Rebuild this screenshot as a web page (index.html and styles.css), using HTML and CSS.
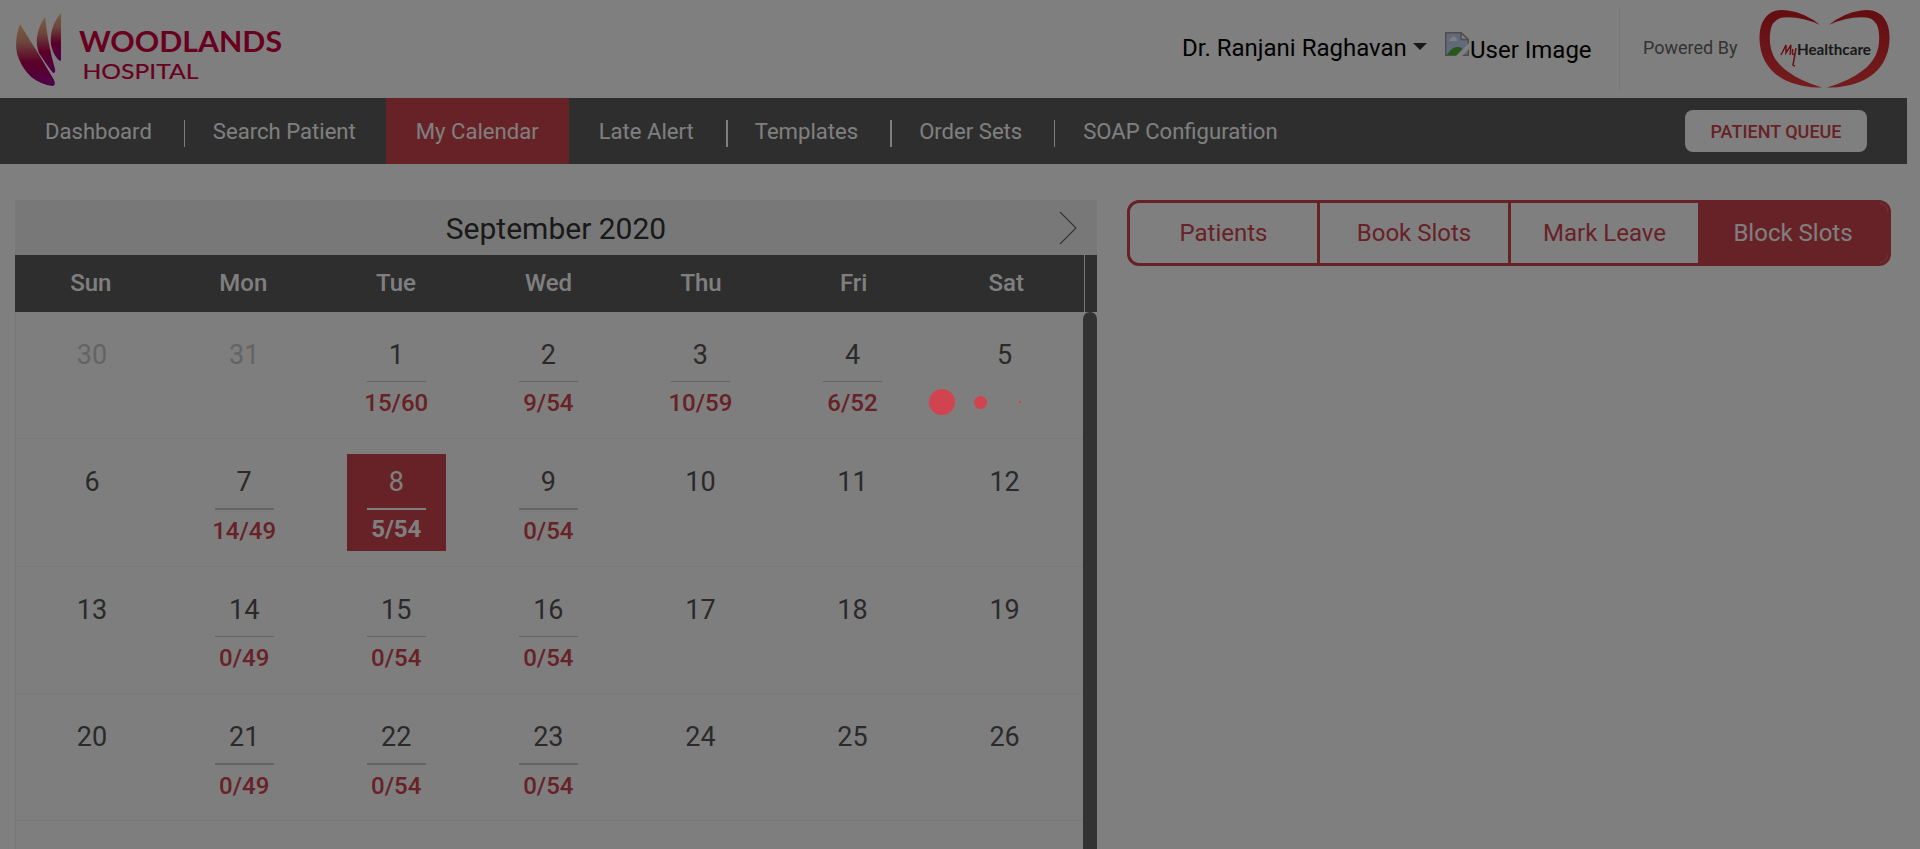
FILE: index.html
```html
<!DOCTYPE html>
<html lang="en">
<head>
<meta charset="utf-8">
<title>My Calendar</title>
<link rel="stylesheet" href="styles.css">
</head>
<body>
<header class="topbar">
  <svg class="brand" width="300" height="98" viewBox="0 0 300 98">
    <defs>
      <linearGradient id="petal" x1="0" y1="0" x2="0" y2="1">
        <stop offset="0" stop-color="#f0be7c"/><stop offset=".3" stop-color="#dc8a78"/>
        <stop offset=".62" stop-color="#b5004e"/><stop offset="1" stop-color="#9c0094"/>
      </linearGradient>
    </defs>
    <g fill="url(#petal)">
      <path d="M20 24C15 38 15 50 19 59C25 74 36 84 53 86Q56 85 54 80L38 53Q26 34 20 24Z"/>
      <path d="M45 17C36 31 35 42 39 53Q46 64 53 73Q56 73 55 69Q48 45 45 17Z"/>
      <path d="M61 13C52 24 50 34 51 45Q54 57 60 61Q61 61 61 59Z"/>
    </g>
    <g fill="#d00040" font-family="Lato, sans-serif">
      <text x="79" y="52" font-size="28.5" font-weight="700" textLength="203" lengthAdjust="spacingAndGlyphs">WOODLANDS</text>
      <text x="82.500" y="78.500" font-size="21.500" stroke="#d00040" stroke-width=".2" textLength="116" lengthAdjust="spacingAndGlyphs">HOSPITAL</text>
    </g>
  </svg>
  <div class="user">
    <span class="user-name">Dr. Ranjani Raghavan</span>
    <span class="caret"></span>
    <svg class="avatar" width="24" height="24" viewBox="0 0 24 24">
      <path d="M.7.7H16L23.300 7.500V23.300H.7Z" fill="#c3d4f5" stroke="#9a9a9a" stroke-width="1.400"/>
      <path d="M4 9Q5 6 7 6Q8 3 10 5Q12 6 12 9Z" fill="#fff"/>
      <path d="M2 23Q7 14 13 15Q16 15 18 17L12 23Z" fill="#4fae35"/>
      <path d="M16 .7V7.500H23.300Z" fill="#fff" stroke="#9a9a9a" stroke-width="1.400"/>
      <path d="M24 11L11 24H17L24 17Z" fill="#fff"/>
    </svg>
    <span class="user-alt">User Image</span>
  </div>
  <div class="powered">Powered By</div>
  <svg class="heart" width="132" height="80" viewBox="0 0 132 80">
    <defs><linearGradient id="hg" x1="0" y1="0" x2="0" y2="1"><stop offset="0" stop-color="#c81c24"/><stop offset="1" stop-color="#ea383c"/></linearGradient></defs>
    <g fill="url(#hg)">
      <path d="M61 16Q47 4 29 1.500Q14-1 6 9Q0 17 .5 30C1 53 15 72 45 77Q54 79 63 78.500Q41 72 28 62C13 51 10 38 11 25Q12 10 24 8.500Q42 7 61 16Z"/>
      <path d="M70 16Q84 4 102 1.500Q117-1 125 9Q131 17 130.500 30C130 53 116 72 86 77Q77 79 68 78.500Q90 72 103 62C118 51 121 38 120 25Q119 10 107 8.500Q89 7 70 16Z"/>
    </g>
    <path d="M22 46L27 36L27 44L32 36L31 46M34 40Q32 47 36 45L37 39M36.500 42L34 56L36 57" fill="none" stroke="#cf202c" stroke-width="1.500"/>
    <text x="38" y="46" font-family="Lato, sans-serif" font-weight="700" font-size="14.500" fill="#333" textLength="74" lengthAdjust="spacingAndGlyphs">Healthcare</text>
  </svg>
</header>

<nav class="nav">
  <a class="nav-item">Dashboard</a><i class="sep"></i>
  <a class="nav-item">Search Patient</a>
  <a class="nav-item nav-active">My Calendar</a>
  <a class="nav-item">Late Alert</a><i class="sep sep-wide"></i>
  <a class="nav-item">Templates</a><i class="sep sep-wide"></i>
  <a class="nav-item">Order Sets</a><i class="sep"></i>
  <a class="nav-item">SOAP Configuration</a>
  <button class="queue">PATIENT QUEUE</button>
</nav>

<main class="content">
  <section class="calendar">
    <div class="month"><span>September 2020</span>
      <svg class="next" width="18" height="34" viewBox="0 0 18 34"><path d="M1 1L17 17L1 33" fill="none" stroke="#666" stroke-width="1.100"/></svg>
    </div>
    <div class="weekdays"><span>Sun</span><span>Mon</span><span>Tue</span><span>Wed</span><span>Thu</span><span>Fri</span><span>Sat</span></div>
    <div class="scroller">
      <div class="weeks">
        <div class="week">
          <div class="day muted">30</div><div class="day muted">31</div>
          <div class="day">1<b>15/60</b></div><div class="day">2<b>9/54</b></div><div class="day">3<b>10/59</b></div><div class="day">4<b>6/52</b></div><div class="day">5</div>
        </div>
        <div class="week thick">
          <div class="day">6</div><div class="day">7<b>14/49</b></div><div class="day today">8<b>5/54</b></div><div class="day">9<b>0/54</b></div><div class="day">10</div><div class="day">11</div><div class="day">12</div>
        </div>
        <div class="week">
          <div class="day">13</div><div class="day">14<b>0/49</b></div><div class="day">15<b>0/54</b></div><div class="day">16<b>0/54</b></div><div class="day">17</div><div class="day">18</div><div class="day">19</div>
        </div>
        <div class="week thick">
          <div class="day">20</div><div class="day">21<b>0/49</b></div><div class="day">22<b>0/54</b></div><div class="day">23<b>0/54</b></div><div class="day">24</div><div class="day">25</div><div class="day">26</div>
        </div>
      </div>
      <div class="thumb"></div>
    </div>
  </section>
  <div class="tabs"><a class="tab">Patients</a><a class="tab tab-ruled">Book Slots</a><a class="tab tab-ruled">Mark Leave</a><a class="tab tab-active">Block Slots</a></div>
</main>

<div class="overlay">
  <div class="loader"><i class="dot dot-l"></i><i class="dot dot-m"></i><i class="dot dot-s"></i></div>
</div>
</body>
</html>
```
FILE: styles.css
```css
* { box-sizing: border-box; }
body {
  margin: 0;
  height: 849px;
  overflow: hidden;
  display: flex;
  flex-direction: column;
  background: #fff;
  font-family: Roboto, sans-serif;
  color: #000;
}

/* Header */
.topbar { height: 98px; flex: none; display: flex; padding-right: 29px; }
.brand { flex: none; }
.user { margin-left: auto; display: flex; font-size: 24px; line-height: 28px; padding-top: 34px; }
.user-name { width: 223px; white-space: nowrap; }
.caret { margin: 9px 18px 0 8px; width: 14px; height: 7px; border: 7px solid transparent; border-top-color: #333; border-bottom: 0; }
.avatar { margin-top: -2px; }
.user-alt { width: 120px; margin: 2px 0 0 1px; white-space: nowrap; }
.powered {
  width: 140px;
  height: 82px;
  margin: 8px 0 0 29px;
  padding-left: 23px;
  border-left: 1px solid #eee;
  font-size: 18px;
  line-height: 80px;
  color: #666;
}
.heart { flex: none; margin-top: 9px; }

/* Navigation */
.nav { width: 1907px; height: 66px; flex: none; display: flex; align-items: center; padding: 0 40px 0 15px; background: #5c5c5c; color: #fff; font-size: 22.100px; }
.nav-item { height: 66px; line-height: 67px; padding: 0 30px; white-space: nowrap; }
.nav-active { background: #cf444e; }
.sep { width: 1px; height: 27px; background: #fff; margin: 5px -2px 0 2px; }
.sep-wide { width: 2px; margin-right: -3px; }
.queue {
  width: 182px;
  height: 42px;
  margin-left: auto;
  border: 0;
  border-radius: 8px;
  background: #fff;
  color: #cf444e;
  font: 500 18px Roboto, sans-serif;
  padding: 0;
}

/* Calendar */
.content { flex: 1; min-height: 0; display: flex; align-items: flex-start; gap: 30px; padding: 36px 0 0 15px; }
.calendar { width: 1082px; height: 649px; display: flex; flex-direction: column; }
.month { height: 55px; flex: none; display: flex; align-items: center; justify-content: center; background: #f0f0f0; font-size: 30px; color: #333; position: relative; padding-top: 2px; }
.next { position: absolute; right: 20px; top: 11px; }
.weekdays { height: 57px; flex: none; display: grid; grid-template-columns: repeat(7, 1fr); padding-right: 14px; background: linear-gradient(to right, #5c5c5c 1069px, #eee 1069px 1070px, #5c5c5c 1070px); color: #fff; font-size: 24px; line-height: 57px; text-align: center; }
.weekdays span { font-weight: 500; margin-left: -1px; }
.scroller { flex: 1; min-height: 0; display: flex; border-left: 1px solid #eee; background: #fdfdfd; }
.weeks { width: 1067px; }
.week { height: 127.300px; display: grid; grid-template-columns: repeat(7, 152.100px); border-bottom: 1px solid #f3f3f3; }
.day { display: flex; flex-direction: column; align-items: center; padding-top: 24px; font-size: 27px; line-height: 38px; color: #555; }
.day b { margin-top: 7px; padding-top: 5px; font-size: 24px; line-height: 34px; font-weight: 500; color: #cf444e; position: relative; }
.day b::before { content: ""; position: absolute; top: 0; left: calc(50% - 29.500px); width: 59px; height: 1px; background: #c8c8c8; }
.thick .day b { padding-top: 6px; }
.thick .day b::before { height: 2px; }
.muted { color: #c8c8c8; }
.today { width: 99px; height: 97px; margin: 15px auto 0; padding-top: 9px; background: #cf444e; color: #fff; }
.day.today b { color: #fff; line-height: 30px; font-weight: 700; }
.day.today b::before { background: #fff; }
.thumb { width: 14px; margin-left: auto; background: #646464; border-radius: 7px 7px 0 0; }

/* Tabs */
.tabs { width: 764px; height: 66px; display: grid; grid-template-columns: 187px 191px 190px 190px; border: 3px solid #cf444e; border-radius: 12px; background: #fff; color: #cf444e; font-size: 24px; line-height: 61px; text-align: center; overflow: hidden; }
.tab-ruled { border-left: 3px solid #cf444e; }
.tab-active { background: #cf444e; color: #fff; }

/* Loading overlay */
.overlay { position: fixed; inset: 0; background: rgba(0, 0, 0, .5); }
.loader { position: absolute; left: 929px; top: 389px; height: 26px; display: flex; align-items: center; }
.dot { border-radius: 50%; background: #d1434f; }
.dot-l { width: 26px; height: 26px; }
.dot-m { width: 13px; height: 13px; margin: 0 32px 0 19px; }
.dot-s { width: 2px; height: 2px; border-radius: 0; }
```
